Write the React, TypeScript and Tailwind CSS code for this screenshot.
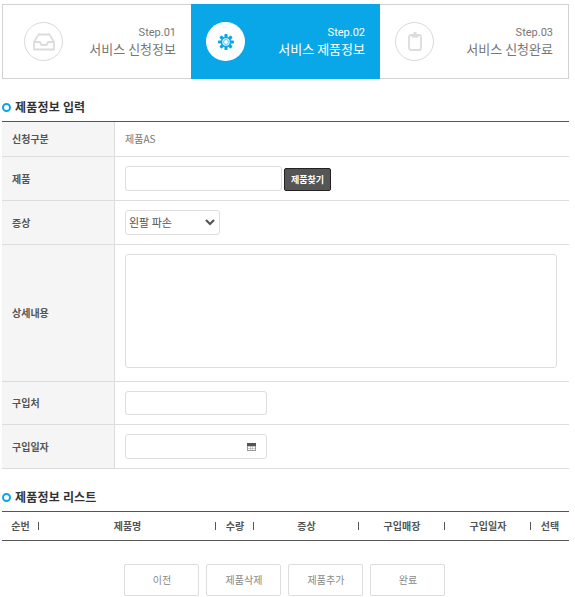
const font = "[font-family:'Noto_Sans_CJK_KR','Noto_Sans',sans-serif]";

function InboxIcon() {
  return (
    <svg width="22" height="18" viewBox="0 0 22 18" fill="none" stroke="#dcdcdc" strokeWidth="1.8" strokeLinejoin="round">
      <path d="M5.5 1.5h11l4.5 7.5v7.5H1V9z" />
      <path d="M1 9h6l1.5 3h5L15 9h6" />
    </svg>
  );
}

function GearIcon() {
  return (
    <svg width="16" height="16" viewBox="0 0 20 20">
      <g fill="#0aa7e8">
        <rect x="8" y="0" width="4" height="20" rx="1" />
        <rect x="8" y="0" width="4" height="20" rx="1" transform="rotate(45 10 10)" />
        <rect x="8" y="0" width="4" height="20" rx="1" transform="rotate(90 10 10)" />
        <rect x="8" y="0" width="4" height="20" rx="1" transform="rotate(135 10 10)" />
      </g>
      <circle cx="10" cy="10" r="6.4" fill="#0aa7e8" />
      <circle cx="10" cy="10" r="4.6" fill="#fff" />
      <circle cx="10" cy="10" r="3.1" fill="none" stroke="#0aa7e8" strokeWidth="1.2" opacity="0.7" />
    </svg>
  );
}

function ClipboardIcon() {
  return (
    <svg width="14" height="19" viewBox="0 0 14 19" fill="none">
      <rect x="1" y="3" width="12" height="15" rx="2" stroke="#dcdcdc" strokeWidth="1.8" />
      <rect x="3.5" y="2" width="7" height="3.5" fill="#dcdcdc" />
      <rect x="5.5" y="0" width="3" height="3" fill="#dcdcdc" />
    </svg>
  );
}

function CalendarIcon() {
  return (
    <svg width="9" height="8" viewBox="0 0 9 8">
      <rect width="9" height="8" fill="#999" />
      <rect width="9" height="3" fill="#555" />
      <g fill="#fff">
        <rect x="1" y="3.5" width="2" height="1.5" />
        <rect x="3.5" y="3.5" width="2" height="1.5" />
        <rect x="6" y="3.5" width="2" height="1.5" />
        <rect x="1" y="5.5" width="2" height="1.5" />
        <rect x="3.5" y="5.5" width="2" height="1.5" />
        <rect x="6" y="5.5" width="2" height="1.5" />
      </g>
    </svg>
  );
}

const steps = [
  { no: "Step.01", title: "서비스 신청정보", icon: <InboxIcon />, active: false, box: "w-[188px] pl-[21px]" },
  { no: "Step.02", title: "서비스 제품정보", icon: <GearIcon />, active: true, box: "w-[189px] pl-[15px]" },
  { no: "Step.03", title: "서비스 신청완료", icon: <ClipboardIcon />, active: false, box: "w-[188px] pl-[15px]" },
];

function Heading({ children }: { children: React.ReactNode }) {
  return (
    <h2 className="flex items-center gap-[4px] text-[12px] font-bold leading-4 tracking-[0.2px] text-[#333]">
      <span className="h-[9px] w-[9px] rounded-full border-2 border-[#0aa7e8]" />
      {children}
    </h2>
  );
}

function Row({ label, h, children }: { label: string; h: string; children: React.ReactNode }) {
  return (
    <div className={`flex border-b border-[#ddd] ${h}`}>
      <div className="flex w-[113px] shrink-0 items-center border-r border-[#ddd] bg-[#f5f5f5] pb-[1px] pl-[10px] text-[10px] font-bold text-[#555]">
        {label}
      </div>
      <div className="flex flex-1 items-center pl-[10px]">{children}</div>
    </div>
  );
}

const inputCls = "rounded-[3px] border border-[#ddd] bg-white";

const cols = [
  { label: "순번", w: "w-[37px]" },
  { label: "제품명", w: "w-[177px]" },
  { label: "수량", w: "w-[38px]" },
  { label: "증상", w: "w-[105px]" },
  { label: "구입매장", w: "w-[86px]" },
  { label: "구입일자", w: "w-[86px]" },
  { label: "선택", w: "flex-1" },
];

export default function App() {
  return (
    <div className={`h-[597px] w-[575px] overflow-hidden bg-white pl-[2px] pr-[6px] pt-[4px] ${font}`}>
      <div className="flex h-[75px] border border-[#d2d2d2]">
        {steps.map((s) => (
          <div
            key={s.no}
            className={`flex shrink-0 items-center justify-between pr-[15px] ${s.box} ${s.active ? "-my-px bg-[#0aa7e8]" : ""}`}
          >
            <span
              className={`flex h-[39px] w-[39px] items-center justify-center rounded-full ${
                s.active ? "bg-white" : "border border-[#d9d9d9] bg-white"
              }`}
            >
              {s.icon}
            </span>
            <div className={`pt-[1px] text-right ${s.active ? "text-white" : "text-[#777]"}`}>
              <div className="text-[11px] leading-[13px] [font-family:Roboto,sans-serif]">{s.no}</div>
              <div className="text-[13px] leading-[19px]">{s.title}</div>
            </div>
          </div>
        ))}
      </div>

      <div className="mt-[20px]">
        <Heading>제품정보 입력</Heading>
      </div>

      <div className="mt-[6px] border-t border-[#555]">
        <Row label="신청구분" h="h-[35px]">
          <span className="pb-[1px] text-[10px] text-[#777]">제품AS</span>
        </Row>
        <Row label="제품" h="h-[44px]">
          <div className={`h-[25px] w-[157px] ${inputCls}`} />
          <button className="ml-[2px] mt-[2px] h-[23px] w-[47px] rounded-[2px] border border-[#222] bg-[#555] text-[9px] font-bold text-white">
            제품찾기
          </button>
        </Row>
        <Row label="증상" h="h-[44px]">
          <div className={`flex h-[25px] w-[95px] items-center justify-between pl-[3px] pr-[4px] text-[11px] text-[#555] ${inputCls}`}>
            <span>왼팔 파손</span>
            <svg width="10" height="7" viewBox="0 0 10 7" fill="none" stroke="#555" strokeWidth="2.2">
              <path d="M1 1l4 4 4-4" />
            </svg>
          </div>
        </Row>
        <Row label="상세내용" h="h-[137px]">
          <div className={`mb-[4px] h-[114px] w-[432px] ${inputCls}`} />
        </Row>
        <Row label="구입처" h="h-[43px]">
          <div className={`h-[24px] w-[142px] ${inputCls}`} />
        </Row>
        <Row label="구입일자" h="h-[44px]">
          <div className={`flex h-[25px] w-[142px] items-center justify-end pr-[10px] ${inputCls}`}>
            <CalendarIcon />
          </div>
        </Row>
      </div>

      <div className="mt-[20px]">
        <Heading>제품정보 리스트</Heading>
      </div>

      <div className="mt-[6px] flex h-[30px] items-center border-y border-[#555]">
        {cols.map((c, i) => (
          <div key={c.label} className={`relative flex h-full items-center justify-center pb-[1px] text-[10px] font-bold text-[#555] ${c.w}`}>
            {c.label}
            {i < cols.length - 1 && <span className="absolute right-0 top-[10px] h-[8px] w-px bg-[#555]" />}
          </div>
        ))}
      </div>

      <div className="mt-[23px] flex justify-center gap-[7px] pr-[3px]">
        {["이전", "제품삭제", "제품추가", "완료"].map((b) => (
          <button key={b} className="h-[32px] w-[75px] rounded-[2px] border border-[#ddd] bg-white pb-[1px] pl-[2px] text-[10px] text-[#888]">
            {b}
          </button>
        ))}
      </div>
    </div>
  );
}
